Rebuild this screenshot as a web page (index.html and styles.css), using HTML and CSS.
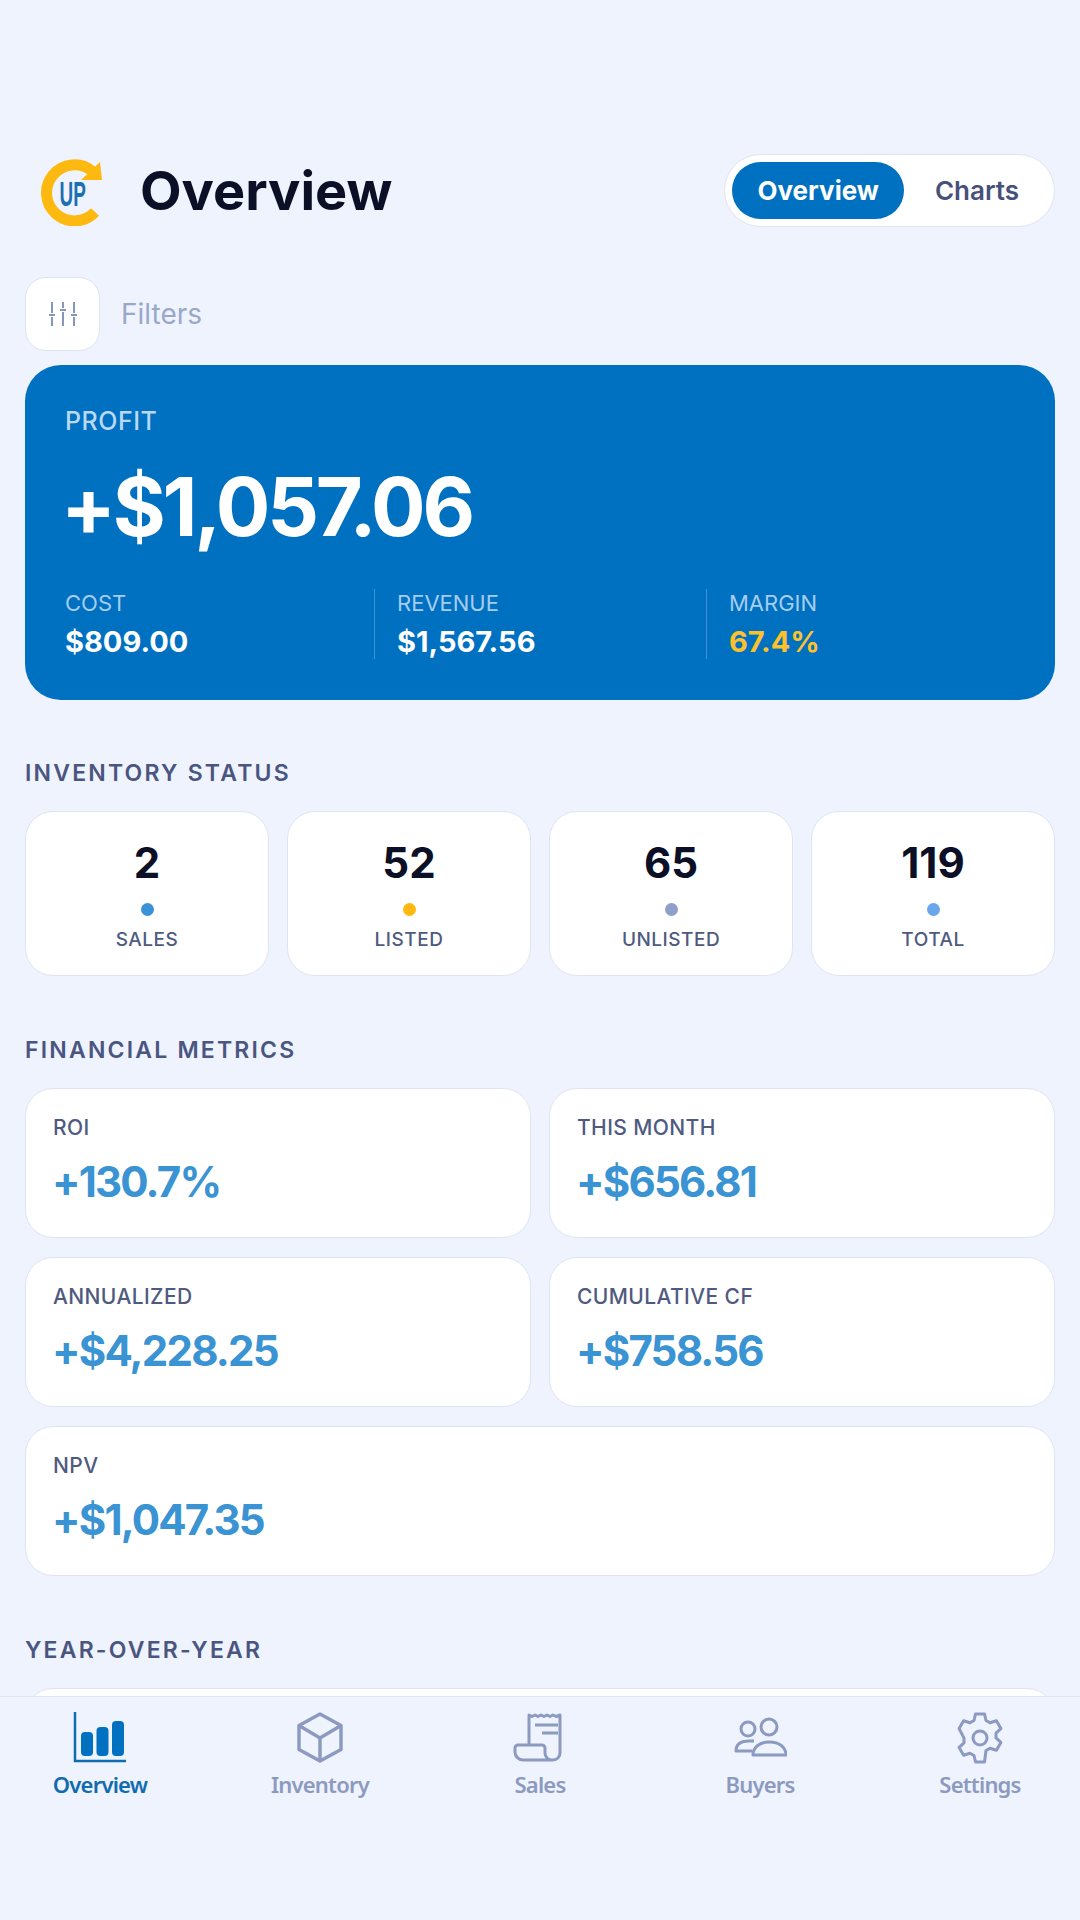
FILE: index.html
```html
<!DOCTYPE html>
<html lang="en">
<head>
  <meta charset="UTF-8" />
  <title>Overview</title>
  <meta name="viewport" content="width=device-width, initial-scale=1" />
  <link rel="stylesheet" href="styles.css">
</head>
<body>
  <main class="page">
    <header class="top">
      <div class="brand">
        <svg class="logo" viewBox="0 0 66 70" aria-hidden="true">
          <path d="M55 15 A28 28 0 1 0 58 56" fill="none" stroke="#fdb90f" stroke-width="11" />
          <path d="M44 24 L65 24 L63 6 Z" fill="#fdb90f" />
          <text x="66" y="50" class="logo-text" transform="scale(.54 1)">UP</text>
        </svg>
        <h1>Overview</h1>
      </div>
      <div class="toggle">
        <span class="toggle-item active">Overview</span>
        <span class="toggle-item">Charts</span>
      </div>
    </header>

    <div class="filters">
      <button class="filter-btn" aria-label="Filters">
        <svg viewBox="0 0 30 30" width="30" height="30" fill="none" stroke="#8796ba" stroke-width="2">
          <path d="M4 3v11M4 18v9M1 16h6M15 3v6M15 13v14M12 11h6M26 3v11M26 18v9M23 16h6" />
        </svg>
      </button>
      <span class="filters-label">Filters</span>
    </div>

    <section class="hero">
      <div class="hero-label">PROFIT</div>
      <div class="hero-amount">+$1,057.06</div>
      <div class="hero-stats">
        <div class="hero-stat">
          <div class="stat-label">COST</div>
          <div class="stat-value">$809.00</div>
        </div>
        <div class="hero-stat">
          <div class="stat-label">REVENUE</div>
          <div class="stat-value">$1,567.56</div>
        </div>
        <div class="hero-stat">
          <div class="stat-label">MARGIN</div>
          <div class="stat-value gold">67.4%</div>
        </div>
      </div>
    </section>

    <h2 class="section-title first">INVENTORY STATUS</h2>
    <div class="status-grid">
      <div class="card status-card">
        <div class="status-num">2</div>
        <span class="dot dot-sales"></span>
        <div class="status-label">SALES</div>
      </div>
      <div class="card status-card">
        <div class="status-num">52</div>
        <span class="dot dot-listed"></span>
        <div class="status-label">LISTED</div>
      </div>
      <div class="card status-card">
        <div class="status-num">65</div>
        <span class="dot dot-unlisted"></span>
        <div class="status-label">UNLISTED</div>
      </div>
      <div class="card status-card">
        <div class="status-num">119</div>
        <span class="dot dot-total"></span>
        <div class="status-label">TOTAL</div>
      </div>
    </div>

    <h2 class="section-title">FINANCIAL METRICS</h2>
    <div class="metric-grid">
      <div class="card metric-card">
        <div class="metric-label">ROI</div>
        <div class="metric-value">+130.7%</div>
      </div>
      <div class="card metric-card">
        <div class="metric-label">THIS MONTH</div>
        <div class="metric-value">+$656.81</div>
      </div>
      <div class="card metric-card">
        <div class="metric-label">ANNUALIZED</div>
        <div class="metric-value">+$4,228.25</div>
      </div>
      <div class="card metric-card">
        <div class="metric-label">CUMULATIVE CF</div>
        <div class="metric-value">+$758.56</div>
      </div>
      <div class="card metric-card wide">
        <div class="metric-label">NPV</div>
        <div class="metric-value">+$1,047.35</div>
      </div>
    </div>

    <h2 class="section-title">YEAR-OVER-YEAR</h2>
    <div class="card yoy-card"></div>
  </main>

  <nav class="tabbar">
    <a class="tab active">
      <svg viewBox="0 0 54 54" width="54" height="54">
        <path d="M2 1v49h51" fill="none" stroke="#0f6cb0" stroke-width="2.500" />
        <rect x="8" y="21" width="12" height="24" rx="4" fill="#0070c0" />
        <rect x="23.500" y="16" width="12" height="29" rx="4" fill="#0070c0" />
        <rect x="39" y="10" width="12" height="35" rx="4" fill="#0070c0" />
      </svg>
      <span>Overview</span>
    </a>
    <a class="tab">
      <svg viewBox="0 0 54 54" width="54" height="54" fill="none" stroke="#8c9ac0" stroke-width="3.500" stroke-linejoin="round">
        <path d="M27 3 48 14.500v24L27 50 6 38.500v-24Z" />
        <path d="M6 14.500 27 27 48 14.500M27 27v23" />
      </svg>
      <span>Inventory</span>
    </a>
    <a class="tab">
      <svg viewBox="0 0 54 54" width="54" height="54" fill="none" stroke="#8c9ac0" stroke-width="3" stroke-linejoin="round">
        <path d="M16 34V4l3 1.500 3-1.500 3 1.500 3-1.500 3 1.500 3-1.500 3 1.500 3-1.500 3 1.500 4-1.500v38a7 7 0 0 1-7 7H10a8 8 0 0 1-8-8v-4a3 3 0 0 1 3-3h24a3 3 0 0 1 3 3v5a7 7 0 0 0 7 7" />
        <path d="M22 14h23M29 22h16" stroke-width="3" />
      </svg>
      <span>Sales</span>
    </a>
    <a class="tab">
      <svg viewBox="0 0 54 54" width="54" height="54" fill="none" stroke="#8c9ac0" stroke-width="3" stroke-linejoin="round">
        <circle cx="15" cy="18" r="7" />
        <circle cx="36" cy="16" r="8" />
        <path d="M19 40H3c0-6 4-10 13-10h5" />
        <path d="M20 44c0-8 7-13 16.500-13S53 36 53 44Z" />
      </svg>
      <span>Buyers</span>
    </a>
    <a class="tab">
      <svg viewBox="0 0 54 54" width="54" height="54" fill="none" stroke="#8c9ac0" stroke-width="3" stroke-linejoin="round">
        <circle cx="27" cy="27" r="7" />
        <path d="M22.500 3h9l1.500 6.500 4 2.300 6.400-2 4.500 7.800-4.900 4.500v4.800l4.900 4.500-4.500 7.800-6.400-2-4 2.300L31.500 51h-9L21 44.500l-4-2.300-6.400 2-4.500-7.800 4.900-4.500v-4.800L6.100 17.600l4.500-7.800 6.400 2 4-2.300Z" />
      </svg>
      <span>Settings</span>
    </a>
  </nav>
</body>
</html>
```

FILE: styles.css
```css
body {
  font-family: 'Inter', sans-serif;
  background: #eff3fe;
  margin: 0;
  height: 1920px;
  overflow: hidden;
  position: relative;
  color: #0b1026;
}

.page {
  padding: 154px 25px 0;
}

.top {
  display: flex;
  justify-content: space-between;
  align-items: center;
  height: 73px;
}

.brand {
  display: flex;
  align-items: center;
  gap: 37px;
  padding-left: 12px;
}

.logo {
  width: 66px;
  height: 70px;
}

.logo-text {
  font-family: 'Liberation Sans', sans-serif;
  font-size: 35px;
  font-weight: 700;
  fill: #1c6fb0;
  text-anchor: middle;
}

h1 {
  margin: 0;
  font-size: 54px;
  font-weight: 700;
  color: #0b1026;
}

.toggle {
  display: flex;
  align-items: center;
  gap: 6px;
  height: 73px;
  box-sizing: border-box;
  padding: 0 10px 0 7px;
  background: white;
  border: 1.5px solid #dfe4f3;
  border-radius: 37px;
}

.toggle-item {
  padding: 0 25px;
  height: 57px;
  line-height: 57px;
  border-radius: 29px;
  font-size: 26px;
  font-weight: 600;
  color: #46507a;
}

.toggle-item.active {
  background: #0070c0;
  color: white;
  font-weight: 700;
}

.filters {
  display: flex;
  align-items: center;
  gap: 21px;
  margin-top: 50px;
}

.filter-btn {
  width: 75px;
  height: 74px;
  display: flex;
  align-items: center;
  justify-content: center;
  padding: 0;
  background: white;
  border: 1.5px solid #dfe4f3;
  border-radius: 21px;
}

.filters-label {
  font-size: 28px;
  color: #99a8c9;
}

.hero {
  margin-top: 14px;
  height: 335px;
  box-sizing: border-box;
  padding: 41px 40px 0;
  background: #0070c0;
  border-radius: 36px;
  color: white;
}

.hero-label {
  font-size: 25px;
  line-height: 30px;
  font-weight: 500;
  letter-spacing: 0.5px;
  color: #b9d9f2;
}

.hero-amount {
  margin: 23px 0 0 -4px;
  font-size: 81px;
  line-height: 96px;
  font-weight: 700;
  letter-spacing: -3.2px;
}

.hero-stats {
  display: grid;
  grid-template-columns: 309px 332px 1fr;
  margin-top: 34px;
}

.hero-stat {
  height: 70px;
  border-left: 1px solid rgba(255,255,255,0.25);
  padding-left: 22px;
}

.hero-stat:first-child {
  border-left: none;
  padding-left: 0;
}

.stat-label {
  font-size: 22px;
  line-height: 28px;
  color: #a5cdf0;
}

.stat-value {
  font-size: 29px;
  line-height: 38px;
  margin-top: 6px;
  font-weight: 700;
}

.stat-value.gold {
  color: #fdc12d;
}

.section-title {
  margin: 60px 0 0;
  height: 28px;
  line-height: 28px;
  font-size: 23px;
  font-weight: 600;
  letter-spacing: 2.2px;
  color: #4a5680;
}

.section-title.first {
  margin-top: 59px;
}

.card {
  background: white;
  border: 1.5px solid #dfe4f3;
  border-radius: 28px;
  box-sizing: border-box;
}

.status-grid {
  display: grid;
  grid-template-columns: repeat(4, 1fr);
  gap: 18px;
  margin-top: 24px;
}

.status-card {
  height: 165px;
  display: flex;
  flex-direction: column;
  align-items: center;
  padding-top: 26px;
}

.status-num {
  font-size: 42px;
  line-height: 50px;
  font-weight: 700;
}

.dot {
  width: 13px;
  height: 13px;
  border-radius: 50%;
  margin-top: 15px;
}

.dot-sales { background: #3a93d8; }
.dot-listed { background: #fdb90f; }
.dot-unlisted { background: #8e9fcc; }
.dot-total { background: #6ba5ec; }

.status-label {
  margin-top: 12px;
  font-size: 19px;
  line-height: 24px;
  font-weight: 500;
  letter-spacing: 0.5px;
  color: #4f5a80;
}

.metric-grid {
  display: grid;
  grid-template-columns: repeat(2, 1fr);
  gap: 19px 18px;
  margin-top: 24px;
}

.metric-card {
  height: 150px;
  padding: 26px 27px 0;
}

.metric-card.wide {
  grid-column: span 2;
}

.metric-label {
  font-size: 21px;
  line-height: 26px;
  font-weight: 500;
  letter-spacing: 0.4px;
  color: #4f5a80;
}

.metric-value {
  margin: 13px 0 0 -1px;
  font-size: 42px;
  line-height: 56px;
  font-weight: 700;
  letter-spacing: -1.8px;
  color: #3a93d3;
}

.yoy-card {
  height: 120px;
  margin-top: 24px;
}

.tabbar {
  position: absolute;
  left: 0;
  right: 0;
  top: 1696px;
  bottom: 0;
  display: grid;
  grid-template-columns: repeat(5, 220px);
  justify-content: center;
  padding-top: 14px;
  box-sizing: border-box;
  background: #eff3fe;
  border-top: 1.5px solid #dfe4f3;
}

.tab {
  display: flex;
  flex-direction: column;
  align-items: center;
  font-family: 'Noto Sans', sans-serif;
  font-size: 22px;
  font-weight: 600;
  letter-spacing: -0.8px;
  color: #8c9ac0;
}

.tab span {
  margin-top: 3px;
  line-height: 32px;
}

.tab.active {
  color: #0f6cb0;
}
```
